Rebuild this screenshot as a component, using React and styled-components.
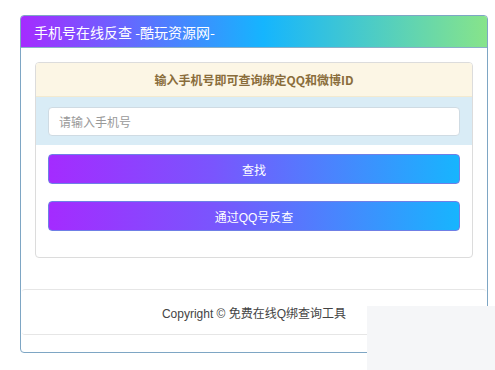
import React from "react";
import { styled, createGlobalStyle } from "styled-components";

const GlobalStyle = createGlobalStyle`
  html, body {
    margin: 0;
    padding: 0;
    background: #fff;
    font-family: "Liberation Sans", "Noto Sans CJK SC", sans-serif;
  }
`;

const App = () => {
  return (
    <Page>
      <GlobalStyle />
      <Panel>
        <Header>手机号在线反查 -酷玩资源网-</Header>
        <Body>
          <Card>
            <Notice>输入手机号即可查询绑定QQ和微博ID</Notice>
            <InputRow>
              <Input placeholder="请输入手机号" />
            </InputRow>
            <Actions>
              <GradButton>查找</GradButton>
              <GradButton>通过QQ号反查</GradButton>
            </Actions>
          </Card>
        </Body>
        <Footer>Copyright © 免费在线Q绑查询工具</Footer>
      </Panel>
      <Overlay />
    </Page>
  );
};

const Page = styled.div`
  position: relative;
  width: 495px;
  height: 370px;
  overflow: hidden;
  padding: 15px 0 0 20px;
  box-sizing: border-box;
`;

const Panel = styled.div`
  width: 468px;
  box-sizing: border-box;
  border: 1px solid #7ea6c4;
  border-radius: 4px;
  overflow: hidden;
  padding-bottom: 17px;
`;

const Header = styled.div`
  height: 31px;
  display: flex;
  align-items: center;
  padding-left: 13px;
  color: #fff;
  font-family: "Noto Sans CJK SC", sans-serif;
  font-size: 14px;
  background: linear-gradient(90deg, #a52bff 0%, #15b5fe 52%, #87e48a 100%);
  border-bottom: 1px solid #8ab0c8;
`;

const Body = styled.div`
  padding: 14px 14px 31px;
`;

const Card = styled.div`
  border: 1px solid #dcdcdc;
  border-radius: 4px;
  overflow: hidden;
`;

const Notice = styled.div`
  height: 33px;
  display: flex;
  align-items: center;
  justify-content: center;
  background: #fcf6e5;
  border-bottom: 1px solid #f3ead0;
  color: #8a6d3b;
  font-family: "Noto Sans CJK SC", sans-serif;
  font-weight: 700;
  font-size: 12px;
`;

const InputRow = styled.div`
  background: #d9ecf6;
  padding: 10px 12px 9px;
`;

const Input = styled.input`
  display: block;
  width: 100%;
  height: 29px;
  box-sizing: border-box;
  border: 1px solid #cfdbe3;
  border-radius: 4px;
  padding: 0 10px;
  font-family: "Noto Sans CJK SC", sans-serif;
  font-size: 12px;
  color: #555;
  background: #fff;
  outline: none;
  &::placeholder {
    color: #999;
  }
`;

const Actions = styled.div`
  display: flex;
  flex-direction: column;
  gap: 17px;
  padding: 9px 12px 26px;
`;

const GradButton = styled.button`
  height: 30px;
  border: 1px solid #6f7fe6;
  border-radius: 4px;
  background: linear-gradient(90deg, #a42bff 0%, #7a55fd 40%, #17b5fe 100%);
  color: #fff;
  font-family: "Liberation Sans", "Noto Sans CJK SC", sans-serif;
  font-size: 12px;
  cursor: pointer;
`;

const Footer = styled.div`
  margin: 0 1px;
  height: 44px;
  display: flex;
  align-items: center;
  justify-content: center;
  border-top: 1px solid #e6e6e6;
  border-bottom: 1px solid #e6e6e6;
  border-radius: 3px;
  color: #444;
  font-size: 12px;
`;

const Overlay = styled.div`
  position: absolute;
  left: 367px;
  top: 306px;
  width: 128px;
  height: 64px;
  background: #f5f6f8;
`;

export default App;
